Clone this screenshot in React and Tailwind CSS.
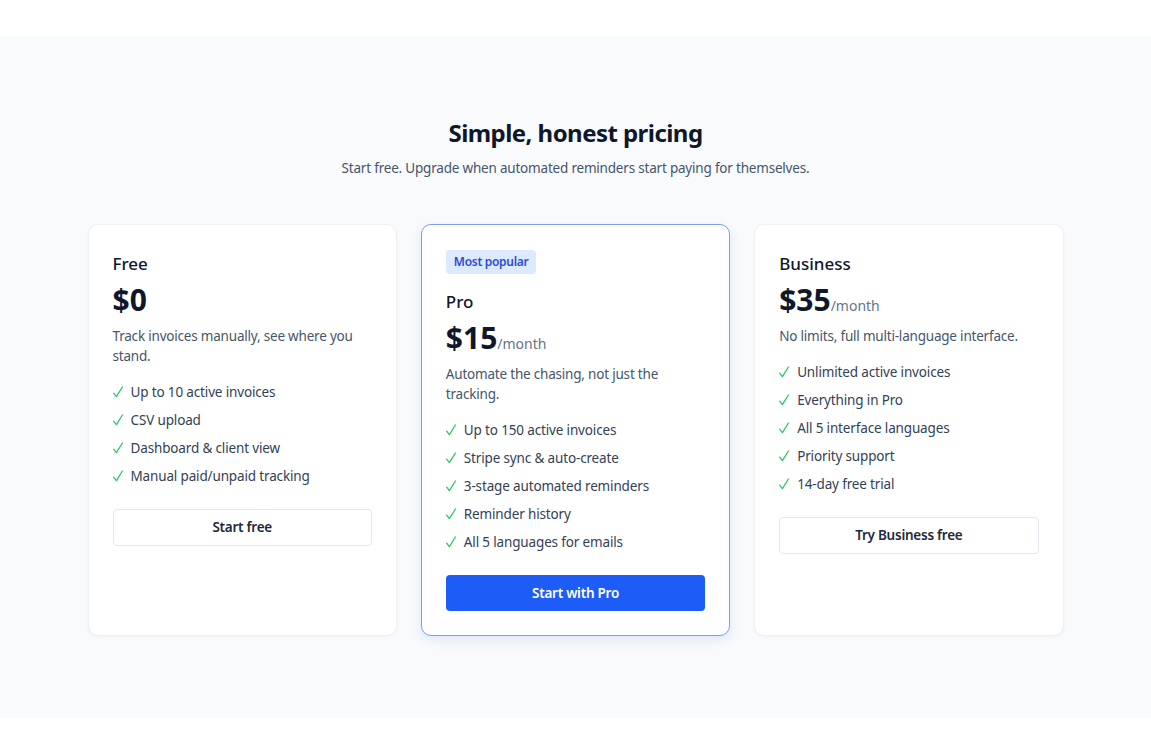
export default function App() {
  const plans = [
    {
      name: "Free",
      price: "$0",
      period: null,
      desc: "Track invoices manually, see where you stand.",
      features: ["Up to 10 active invoices", "CSV upload", "Dashboard & client view", "Manual paid/unpaid tracking"],
      cta: "Start free",
      featured: false,
    },
    {
      name: "Pro",
      price: "$15",
      period: "/month",
      desc: "Automate the chasing, not just the tracking.",
      features: ["Up to 150 active invoices", "Stripe sync & auto-create", "3-stage automated reminders", "Reminder history", "All 5 languages for emails"],
      cta: "Start with Pro",
      featured: true,
    },
    {
      name: "Business",
      price: "$35",
      period: "/month",
      desc: "No limits, full multi-language interface.",
      features: ["Unlimited active invoices", "Everything in Pro", "All 5 interface languages", "Priority support", "14-day free trial"],
      cta: "Try Business free",
      featured: false,
    },
  ];

  return (
    <div className="min-h-[749px] bg-white" style={{ fontFamily: '"Noto Sans", "Open Sans", sans-serif' }}>
      <div className="h-[36px]" />
      <section className="bg-[#f8fafc] pt-[81px] pb-[82px]">
        <div className="text-center">
          <h2 className="text-[24px] leading-8 font-bold tracking-[-0.55px] text-[#0f172a]">Simple, honest pricing</h2>
          <p className="mt-[9px] text-[13.5px] leading-5 tracking-[-0.2px] text-[#475569]">
            Start free. Upgrade when automated reminders start paying for themselves.
          </p>
        </div>
        <div className="mx-auto mt-[46px] w-[976px] grid grid-cols-3 gap-[24px] items-stretch">
          {plans.map((p) => (
            <div
              key={p.name}
              className={
                p.featured
                  ? "rounded-[10px] border border-[#7e9cf3] bg-white px-6 pt-[23px] pb-6 shadow-[0_4px_12px_rgba(37,99,235,0.12)]"
                  : "rounded-[10px] border border-[#eef0f3] bg-white px-6 pt-[25px] pb-6 shadow-[0_1px_3px_rgba(15,23,42,0.04)]"
              }
            >
              {p.featured && (
                <div className="mb-[14px] inline-flex h-[24px] items-center rounded-[4px] bg-[#dbeafe] px-2 text-[12px] font-semibold tracking-[-0.3px] text-[#2a4bd3]">
                  Most popular
                </div>
              )}
              <h3 className="text-[17px] leading-7 font-medium text-[#0f172a]">{p.name}</h3>
              <div className="mt-[4px] flex items-baseline">
                <span className="text-[30px] leading-9 font-bold text-[#0f172a]">{p.price}</span>
                {p.period && <span className="text-[14px] text-[#64748b]">{p.period}</span>}
              </div>
              <p className="mt-[8px] text-[13.5px] leading-5 tracking-[-0.2px] text-[#475569]">{p.desc}</p>
              <ul className="mt-[16px] flex flex-col gap-[8px]">
                {p.features.map((f) => (
                  <li key={f} className="flex items-center gap-[8px] text-[13.5px] leading-5 tracking-[-0.15px] text-[#334155]">
                    <svg width="10" height="12" viewBox="0 0 10 12" fill="none" className="shrink-0">
                      <path d="M0.6 7.2 L3.4 10.6 L9.4 1" stroke="#22c55e" strokeWidth="1.2" strokeLinecap="round" strokeLinejoin="round" />
                    </svg>
                    <span>{f}</span>
                  </li>
                ))}
              </ul>
              <button
                className={
                  p.featured
                    ? "mt-[23px] h-[36px] w-full rounded-[4px] bg-[#1d5cf7] text-[13.5px] font-semibold tracking-[-0.25px] text-white"
                    : "mt-[23px] h-[37px] w-full rounded-[4px] border border-[#e2e8f0] bg-white text-[13.5px] font-semibold tracking-[-0.25px] text-[#1e293b]"
                }
              >
                {p.cta}
              </button>
            </div>
          ))}
        </div>
      </section>
    </div>
  );
}
